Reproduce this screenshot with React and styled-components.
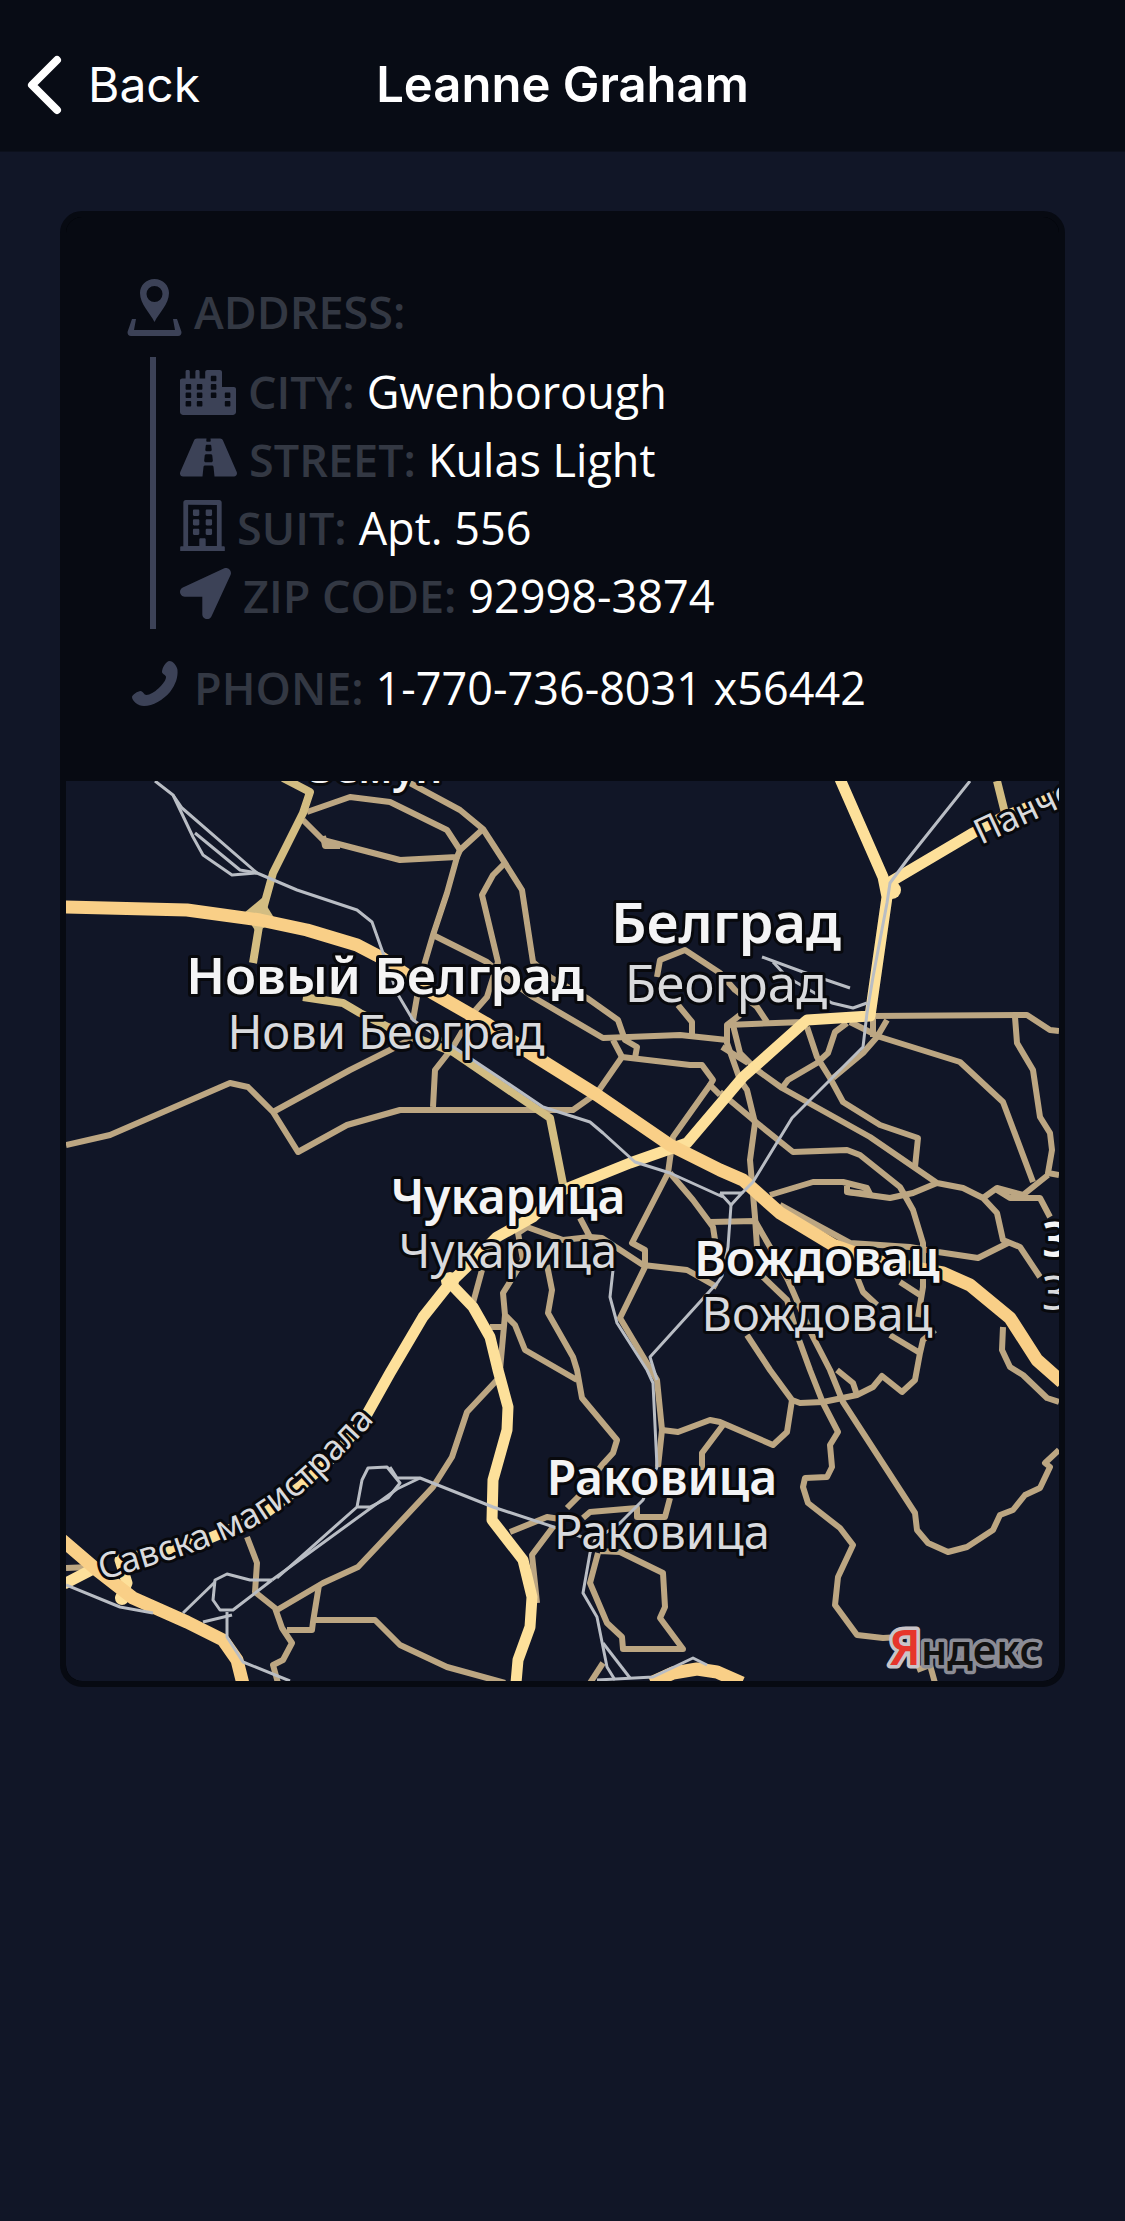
import React from "react";
import styled, { createGlobalStyle } from "styled-components";
import { FaCity, FaRoad, FaRegBuilding, FaLocationArrow } from "react-icons/fa";

const GlobalStyle = createGlobalStyle`
  * { box-sizing: border-box; }
  body {
    margin: 0;
    background: #111627;
    color: #fff;
    font-family: "Open Sans", "Noto Sans", sans-serif;
  }
`;

const Header = styled.header`
  display: grid;
  grid-template-columns: 1fr auto 1fr;
  align-items: center;
  height: 152px;
  padding: 18px 26px 0;
  background: #080c15;
  border-bottom: 1px solid #0c101c;
  font-family: Inter, "Liberation Sans", sans-serif;
`;

const BackButton = styled.button`
  display: flex;
  align-items: center;
  gap: 24px;
  justify-self: start;
  padding: 0;
  border: 0;
  background: none;
  color: #fff;
  font: inherit;
  font-size: 48px;
  line-height: 60px;
  cursor: pointer;
`;

const Title = styled.h1`
  margin: 0;
  font-size: 49px;
  font-weight: 600;
  line-height: 60px;
`;

const Main = styled.main`
  padding: 59px 60px;
`;

const Card = styled.article`
  overflow: hidden;
  border: 6px solid #070a12;
  border-radius: 22px;
  background: #030408;
`;

const Info = styled.div`
  padding: 60px;
  border-radius: 16px 16px 0 0;
  background: #070a12;
`;

const Row = styled.div`
  display: flex;
  align-items: flex-start;
  gap: 12px;
  height: 68px;
  font-size: 45px;
  line-height: 70px;
  white-space: nowrap;
`;

const IconBox = styled.span`
  flex: none;
  align-self: flex-end;
  padding-bottom: ${(p) => p.$lift || 10}px;
  color: #3c4257;

  svg {
    display: block;
    width: ${(p) => p.$width}px;
    height: ${(p) => p.$height}px;
  }
`;

const Label = styled.span`
  color: #333843;
  font-weight: 600;
`;

const Value = styled.span`
  color: #fff;
`;

const Nested = styled.div`
  margin: 12px 0 24px 24px;
  padding-left: 24px;
  border-left: 6px solid #3c4257;
`;

const MapSvg = styled.svg`
  display: block;
  width: 100%;
  height: auto;
  border-radius: 0 0 16px 16px;
  background: #111627;
  font-family: "Noto Sans", "Open Sans", sans-serif;
`;

const Roads = styled.g`
  fill: none;
  stroke: ${(p) => p.$color};
  stroke-width: ${(p) => p.$width};
  stroke-linejoin: round;
`;

const Place = styled.text`
  fill: ${(p) => (p.$strong ? "#f4f4f5" : "#d9dadd")};
  font-size: ${(p) => p.$size}px;
  font-weight: ${(p) => (p.$strong ? 600 : 400)};
  text-anchor: ${(p) => p.$anchor || "middle"};
  paint-order: stroke;
  stroke: #08090d;
  stroke-width: 6px;
  stroke-linejoin: round;
`;

const minorRoads = [
  "307,812 350,797 390,802 447,830 460,850 483,829",
  "410,783 460,810 483,829 505,863 522,890 533,962 550,977 587,998 618,1020 625,1040 637,1047 635,1058",
  "303,820 323,840 400,860 457,857 460,850",
  "323,836 325,846 340,846",
  "457,857 447,893 433,935 425,962 417,997 413,1020",
  "433,935 487,962 505,977 533,997 603,1038 680,1035 727,1040",
  "505,863 493,875 482,895 498,962 487,997 473,1013 453,1047 435,1070 433,1107",
  "613,1040 622,1057 690,1065 702,1065 713,1080 710,1085 720,1095",
  "720,1092 757,1123 793,1152 847,1150 860,1155 900,1187 913,1210 923,1243 923,1287 918,1317",
  "710,1085 673,1137 668,1173 632,1243 645,1250 645,1267 620,1318 657,1380 662,1430 658,1467",
  "622,1057 597,1093 573,1110 400,1110 347,1125 298,1152 273,1112 248,1087 230,1083 110,1135 66,1145",
  "273,1112 350,1070 390,1050 413,1038",
  "657,977 660,960 685,950 720,973 735,990 757,1007 767,1022",
  "678,1005 692,1022 692,1035",
  "727,1025 803,1022 870,1016 1027,1015 1050,1030 1059,1031",
  "1015,1017 1017,1043 1033,1070 1040,1117 1050,1133 1052,1150 1048,1173 1059,1175",
  "1048,1175 1023,1195 997,1188 983,1198",
  "997,1190 1010,1198 1040,1198 1050,1217",
  "850,1022 880,1037 960,1062 1003,1102 1033,1182",
  "887,1020 877,1037 863,1053 833,1078",
  "873,1017 873,1037",
  "847,1023 835,1032 828,1053 817,1063 788,1080 782,1088",
  "807,1027 817,1057 830,1078 843,1102 880,1125 918,1138 915,1167",
  "740,1015 727,1025 727,1043 740,1080 747,1090 755,1123 750,1160 755,1217 757,1247",
  "733,1025 740,1053 757,1070 782,1088 870,1137 937,1183 963,1188 983,1198 997,1213 1003,1240 1020,1247 1040,1277",
  "722,1047 748,1063",
  "770,1195 813,1182 843,1182 867,1188 870,1194 847,1192 847,1186",
  "847,1192 890,1198 913,1193 937,1183",
  "780,1205 850,1243 910,1247 938,1252 978,1258 1010,1242",
  "670,1173 693,1200 713,1227 715,1240",
  "710,1222 755,1221 770,1247 788,1280",
  "763,1277 787,1300 798,1337 810,1370 823,1403 838,1432 830,1445 832,1467 827,1477 805,1478 803,1487 808,1503 840,1528 853,1545 838,1577 835,1605 857,1635 883,1638 900,1637",
  "788,1280 798,1303 813,1337 830,1370 843,1402 915,1513 917,1530 928,1543 948,1552 967,1547 993,1530 1000,1515 1013,1510 1025,1495 1040,1488 1050,1467 1045,1463 1059,1450",
  "747,1335 770,1370 792,1400 800,1403 823,1402 857,1395 873,1387 882,1376 902,1392 915,1380 920,1353 923,1340 935,1330",
  "837,1370 853,1383 857,1395",
  "890,1335 920,1353",
  "857,1277 863,1292 877,1305",
  "900,1282 920,1295",
  "792,1400 787,1432 773,1445 720,1422 710,1420 678,1432 662,1430",
  "723,1425 702,1453 702,1470",
  "670,1498 665,1517 637,1517 637,1508 590,1512 583,1518",
  "553,1527 532,1555 537,1603",
  "510,1532 547,1517 560,1519",
  "567,1508 580,1495 602,1465 613,1453 617,1440 582,1398 577,1370 573,1357 548,1313 552,1290 547,1265",
  "577,1380 525,1350 515,1325 505,1315 503,1293 513,1277 523,1260 518,1233 527,1227 563,1240 590,1237 580,1218",
  "590,1237 602,1238 643,1265 687,1270 717,1287",
  "505,1315 500,1370",
  "482,1270 473,1303",
  "490,1327 503,1327",
  "497,1380 467,1412 452,1457 433,1487 390,1533 358,1567 323,1583 277,1610",
  "319,1585 313,1622 312,1630 287,1630",
  "313,1620 375,1620 400,1645 447,1667 505,1683",
  "247,1537 257,1563 255,1592 275,1608 282,1628 292,1643 283,1660 273,1665 278,1683",
  "598,1553 590,1583 607,1623 622,1637 623,1649 683,1649 660,1618 665,1607 663,1573 620,1552 600,1551",
  "603,1663 590,1683",
  "917,1670 930,1665 935,1683",
  "1003,1327 1002,1350 1010,1367 1023,1375 1047,1398 1059,1402",
  "66,1568 90,1567",
];

const secondaryRoads = [
  "283,778 310,792 303,813 273,873 260,920 253,963",
  "303,997 343,1003 360,1013 388,1027 453,1052 497,1082 550,1118 563,1184",
  "997,781 1005,813",
];

const primaryRoads = [
  "840,779 883,877 887,897 870,1016 807,1020 743,1077 687,1143 667,1150 630,1163 563,1190 533,1217 497,1237 477,1257 450,1283 423,1317 390,1373 362,1423 337,1453 300,1487 260,1517 210,1538 167,1550 120,1560 127,1583 120,1600",
  "885,885 973,833 1003,817 1062,794",
  "64,1584 95,1568",
  "450,1283 473,1307 490,1337 498,1370 508,1407 507,1430 493,1480 492,1520 523,1560 532,1597 530,1627 518,1660 516,1683",
];

const motorways = [
  "64,907 187,910 260,920 307,930 357,945 380,957 433,993 487,1024 533,1055 597,1095 670,1145 720,1170 743,1180 780,1213 833,1245 880,1262 943,1273 970,1285 1010,1318 1037,1360 1062,1382",
  "62,1540 97,1570 133,1598 187,1622 223,1640 237,1660 243,1684",
  "651,1683 673,1673 697,1669 717,1672 742,1683",
];

const railways = [
  "155,781 173,795 182,808 257,873",
  "173,795 193,837 203,855 232,875 257,873",
  "195,833 240,870 257,873 297,890 327,900 357,910 372,922 383,953 397,993 413,1020 470,1058 503,1080 543,1107 590,1122 603,1133 635,1162 670,1173 723,1197",
  "720,1193 742,1193 731,1205 720,1193",
  "731,1205 728,1247 722,1276 718,1282 650,1357 657,1380",
  "613,1270 610,1297 617,1323 647,1370 653,1383 657,1467 643,1500 620,1523 595,1540 590,1553 583,1593 597,1617 607,1667 615,1680",
  "970,781 907,860 890,883 887,903 873,977 867,1013 863,1047 833,1077 792,1118 753,1182 742,1193",
  "762,957 803,972 850,988",
  "773,962 787,977 832,1003 853,1008 867,1003",
  "357,1507 362,1480 368,1468 387,1467 400,1483 388,1498 370,1507 357,1507 277,1578",
  "420,1478 397,1489 272,1580",
  "390,1467 397,1478 420,1478 493,1507 557,1528 582,1537",
  "272,1580 250,1580 227,1574 215,1580 213,1600 220,1610 233,1610 272,1580",
  "215,1582 183,1613",
  "232,1615 203,1622",
  "227,1612 227,1637 243,1662 290,1681",
  "66,1585 120,1607 153,1613",
  "603,1643 630,1678",
  "597,1680 653,1677 693,1658 707,1665",
];

const places = [
  { name: "Белград", x: 726, y: 943, size: 56, strong: true },
  { name: "Београд", x: 726, y: 1002, size: 51 },
  { name: "Новый Белград", x: 385, y: 994, size: 51, strong: true },
  { name: "Нови Београд", x: 386, y: 1049, size: 47 },
  { name: "Чукарица", x: 508, y: 1214, size: 48, strong: true },
  { name: "Чукарица", x: 508, y: 1268, size: 47 },
  { name: "Вождовац", x: 817, y: 1276, size: 48, strong: true },
  { name: "Вождовац", x: 817, y: 1331, size: 47 },
  { name: "Раковица", x: 662, y: 1495, size: 48, strong: true },
  { name: "Раковица", x: 662, y: 1549, size: 47 },
  { name: "Земун", x: 376, y: 783, size: 42, strong: true },
  { name: "З", x: 1042, y: 1257, size: 48, strong: true, anchor: "start" },
  { name: "З", x: 1042, y: 1310, size: 47, anchor: "start" },
];

const RoadLines = ({ roads, color, width }) => (
  <Roads $color={color} $width={width}>
    {roads.map((points) => (
      <polyline key={points} points={points} />
    ))}
  </Roads>
);

const CityMap = () => (
  <MapSvg viewBox="66 781 993 900" role="img" aria-label="Белград">
    <defs>
      <path id="savska" d="M102 1580 C160 1563 215 1548 257 1525 C300 1500 342 1457 374 1421" />
      <path id="pancevo" d="M981 845 L1075 801" />
    </defs>
    <RoadLines roads={minorRoads} color="#bca682" width={6} />
    <RoadLines roads={secondaryRoads} color="#d3bd82" width={8} />
    <RoadLines roads={primaryRoads} color="#fde09a" width={11} />
    <circle cx="892" cy="890" r="9" fill="#fde09a" />
    <circle cx="450" cy="1281" r="9" fill="#fde09a" />
    <circle cx="122" cy="1598" r="7" fill="#fde09a" />
    <path d="M244 913 L262 898 L276 921 L256 932 Z" fill="#d3bd82" />
    <RoadLines roads={motorways} color="#f9cf87" width={13} />
    <RoadLines roads={railways} color="#b9bdc4" width={3} />
    {places.map((p) => (
      <Place key={`${p.name}-${p.y}`} x={p.x} y={p.y} $size={p.size} $strong={p.strong} $anchor={p.anchor}>
        {p.name}
      </Place>
    ))}
    <Place $size={35} $anchor="start">
      <textPath href="#savska">Савска магистрала</textPath>
    </Place>
    <Place $size={35} $anchor="start">
      <textPath href="#pancevo">Панче</textPath>
    </Place>
    <text x="889" y="1665" fontSize="41" fontWeight="600" fill="#111" stroke="#8b8c95" strokeWidth="7" strokeLinejoin="round" paintOrder="stroke">
      <tspan fill="#e6352b" stroke="#c9c4c8" fontSize="48">Я</tspan>ндекс
    </text>
  </MapSvg>
);

const ChevronIcon = () => (
  <svg width="38" height="62" viewBox="0 0 38 62" fill="none" aria-hidden="true">
    <path d="M31 6 L6 31 L31 56" stroke="#fff" strokeWidth="8" strokeLinecap="round" strokeLinejoin="round" />
  </svg>
);

const AddressIcon = () => (
  <svg viewBox="0 0 56 57" fill="currentColor" aria-hidden="true">
    <path fillRule="evenodd" d="M28.500 0 C20 0 14 6.500 14 14 C14 25 24 34 28.500 43 C33 34 43 25 43 14 C43 6.500 37 0 28.500 0 Z M28.500 7 A8 8 0 1 1 28.500 23 A8 8 0 1 1 28.500 7 Z" />
    <path d="M6 40 H10 L8 51 H49 L47 40 H51 L55.500 53 Q55.500 57 52 57 H5 Q1.500 57 1.500 53 Z" />
  </svg>
);

const PhoneIcon = () => (
  <svg viewBox="0 0 56 51" fill="currentColor" aria-hidden="true">
    <path d="M43.500 1 C47 1 51 6 51.500 10 C52 17 50 24 44 32 C37 40 27 46 18 46 C12 46 6 41 6 37 C6 35 12 31 14.500 31 C17 31 18 35 20.500 35 C27 35 40 23 40 17 C40 15 36 14 36 12 C36 8 40 1 43.500 1 Z" />
  </svg>
);

const details = [
  { label: "CITY", value: "Gwenborough", Icon: FaCity, width: 56, height: 45 },
  { label: "STREET", value: "Kulas Light", Icon: FaRoad, width: 57, height: 51 },
  { label: "SUIT", value: "Apt. 556", Icon: FaRegBuilding, width: 45, height: 51 },
  { label: "ZIP CODE", value: "92998-3874", Icon: FaLocationArrow, width: 51, height: 51 },
];

const Detail = ({ label, value, Icon, width, height, lift }) => (
  <Row>
    <IconBox $width={width} $height={height} $lift={lift}>
      <Icon />
    </IconBox>
    <Label>{label}:</Label>
    {value && <Value>{value}</Value>}
  </Row>
);

export default function App() {
  return (
    <>
      <GlobalStyle />
      <Header>
        <BackButton type="button">
          <ChevronIcon />
          Back
        </BackButton>
        <Title>Leanne Graham</Title>
      </Header>
      <Main>
        <Card>
          <Info>
            <Detail label="ADDRESS" Icon={AddressIcon} width={56} height={57} lift={9} />
            <Nested>
              {details.map((d) => (
                <Detail key={d.label} {...d} />
              ))}
            </Nested>
            <Detail label="PHONE" value="1-770-736-8031 x56442" Icon={PhoneIcon} width={56} height={51} />
          </Info>
          <CityMap />
        </Card>
      </Main>
    </>
  );
}
